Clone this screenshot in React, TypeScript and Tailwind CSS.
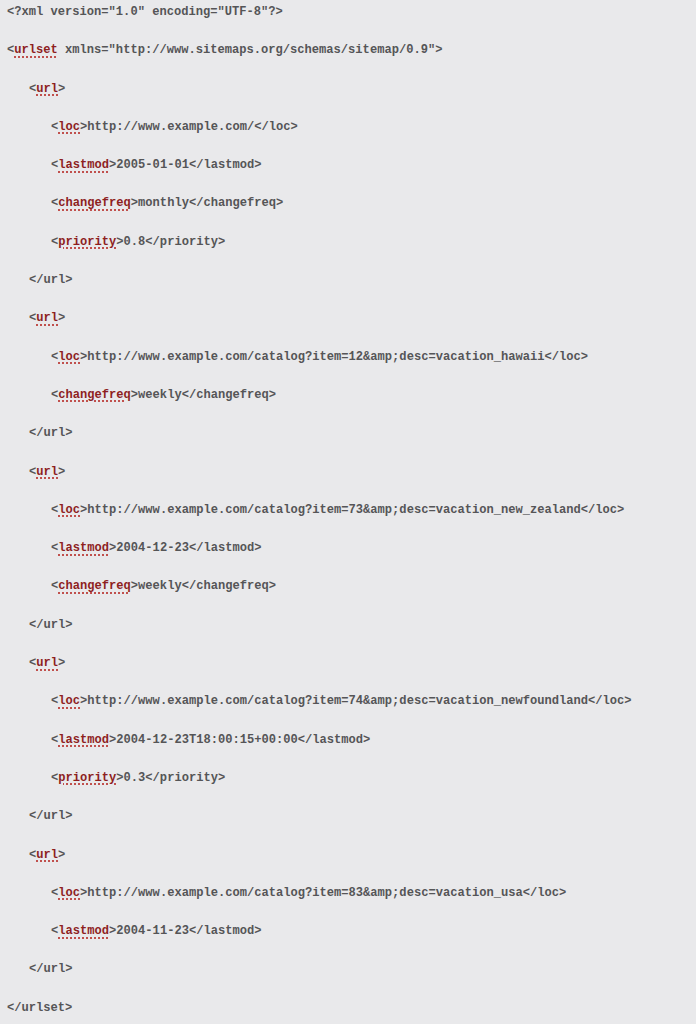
const LINES: [number, string, string, string][] = [
  [0, '<?xml version="1.0" encoding="UTF-8"?>', '', ''],
  [0, '<', 'urlset', ' xmlns="http://www.sitemaps.org/schemas/sitemap/0.9">'],
  [1, '<', 'url', '>'],
  [2, '<', 'loc', '>http://www.example.com/</loc>'],
  [2, '<', 'lastmod', '>2005-01-01</lastmod>'],
  [2, '<', 'changefreq', '>monthly</changefreq>'],
  [2, '<', 'priority', '>0.8</priority>'],
  [1, '</url>', '', ''],
  [1, '<', 'url', '>'],
  [2, '<', 'loc', '>http://www.example.com/catalog?item=12&amp;desc=vacation_hawaii</loc>'],
  [2, '<', 'changefreq', '>weekly</changefreq>'],
  [1, '</url>', '', ''],
  [1, '<', 'url', '>'],
  [2, '<', 'loc', '>http://www.example.com/catalog?item=73&amp;desc=vacation_new_zealand</loc>'],
  [2, '<', 'lastmod', '>2004-12-23</lastmod>'],
  [2, '<', 'changefreq', '>weekly</changefreq>'],
  [1, '</url>', '', ''],
  [1, '<', 'url', '>'],
  [2, '<', 'loc', '>http://www.example.com/catalog?item=74&amp;desc=vacation_newfoundland</loc>'],
  [2, '<', 'lastmod', '>2004-12-23T18:00:15+00:00</lastmod>'],
  [2, '<', 'priority', '>0.3</priority>'],
  [1, '</url>', '', ''],
  [1, '<', 'url', '>'],
  [2, '<', 'loc', '>http://www.example.com/catalog?item=83&amp;desc=vacation_usa</loc>'],
  [2, '<', 'lastmod', '>2004-11-23</lastmod>'],
  [1, '</url>', '', ''],
  [0, '</urlset>', '', ''],
]

const indent = ['pl-[7px]', 'pl-[29px]', 'pl-[51px]']

export default function App() {
  return (
    <div className="min-h-screen w-full bg-[#e9e9eb] pt-[4px] overflow-hidden">
      <div className="flex flex-col gap-[22.3px] font-['Liberation_Mono','Courier_New',monospace] text-[12.1px] font-bold text-[#555557]">
        {LINES.map(([lvl, pre, tag, post], i) => (
          <div key={i} className={`h-[16px] leading-[16px] whitespace-pre ${indent[lvl]}`}>
            {pre}
            {tag && (
              <span className="text-[#8e1f1f] underline decoration-dotted decoration-[#c0504d] decoration-[1.5px] underline-offset-[3px]">
                {tag}
              </span>
            )}
            {post}
          </div>
        ))}
      </div>
    </div>
  )
}
